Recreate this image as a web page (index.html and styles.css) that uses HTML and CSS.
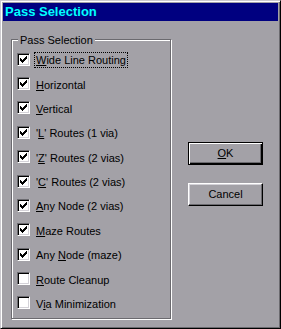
FILE: index.html
```html
<!DOCTYPE html>
<html>
<head>
<meta charset="utf-8">
<link rel="stylesheet" href="styles.css">
</head>
<body>
<div class="window">
  <div class="titlebar">Pass Selection</div>
  <div class="main">
    <div class="group">
      <span class="legend">Pass Selection</span>
      <div class="rows">
        <div class="row"><span class="cb on"><svg viewBox="0 0 7 7" width="7" height="7"><path d="M0 2h1v3H0zM1 3h1v3H1zM2 4h1v3H2zM3 3h1v3H3zM4 2h1v3H4zM5 1h1v3H5zM6 0h1v3H6z"/></svg></span><span class="lbl focus"><u>W</u>ide Line Routing</span></div>
        <div class="row"><span class="cb on"><svg viewBox="0 0 7 7" width="7" height="7"><path d="M0 2h1v3H0zM1 3h1v3H1zM2 4h1v3H2zM3 3h1v3H3zM4 2h1v3H4zM5 1h1v3H5zM6 0h1v3H6z"/></svg></span><span class="lbl"><u>H</u>orizontal</span></div>
        <div class="row"><span class="cb on"><svg viewBox="0 0 7 7" width="7" height="7"><path d="M0 2h1v3H0zM1 3h1v3H1zM2 4h1v3H2zM3 3h1v3H3zM4 2h1v3H4zM5 1h1v3H5zM6 0h1v3H6z"/></svg></span><span class="lbl"><u>V</u>ertical</span></div>
        <div class="row"><span class="cb on"><svg viewBox="0 0 7 7" width="7" height="7"><path d="M0 2h1v3H0zM1 3h1v3H1zM2 4h1v3H2zM3 3h1v3H3zM4 2h1v3H4zM5 1h1v3H5zM6 0h1v3H6z"/></svg></span><span class="lbl">'<u>L</u>' Routes (1 via)</span></div>
        <div class="row"><span class="cb on"><svg viewBox="0 0 7 7" width="7" height="7"><path d="M0 2h1v3H0zM1 3h1v3H1zM2 4h1v3H2zM3 3h1v3H3zM4 2h1v3H4zM5 1h1v3H5zM6 0h1v3H6z"/></svg></span><span class="lbl">'<u>Z</u>' Routes (2 vias)</span></div>
        <div class="row"><span class="cb on"><svg viewBox="0 0 7 7" width="7" height="7"><path d="M0 2h1v3H0zM1 3h1v3H1zM2 4h1v3H2zM3 3h1v3H3zM4 2h1v3H4zM5 1h1v3H5zM6 0h1v3H6z"/></svg></span><span class="lbl">'<u>C</u>' Routes (2 vias)</span></div>
        <div class="row"><span class="cb on"><svg viewBox="0 0 7 7" width="7" height="7"><path d="M0 2h1v3H0zM1 3h1v3H1zM2 4h1v3H2zM3 3h1v3H3zM4 2h1v3H4zM5 1h1v3H5zM6 0h1v3H6z"/></svg></span><span class="lbl"><u>A</u>ny Node (2 vias)</span></div>
        <div class="row"><span class="cb on"><svg viewBox="0 0 7 7" width="7" height="7"><path d="M0 2h1v3H0zM1 3h1v3H1zM2 4h1v3H2zM3 3h1v3H3zM4 2h1v3H4zM5 1h1v3H5zM6 0h1v3H6z"/></svg></span><span class="lbl"><u>M</u>aze Routes</span></div>
        <div class="row"><span class="cb on"><svg viewBox="0 0 7 7" width="7" height="7"><path d="M0 2h1v3H0zM1 3h1v3H1zM2 4h1v3H2zM3 3h1v3H3zM4 2h1v3H4zM5 1h1v3H5zM6 0h1v3H6z"/></svg></span><span class="lbl">Any <u>N</u>ode (maze)</span></div>
        <div class="row"><span class="cb"></span><span class="lbl"><u>R</u>oute Cleanup</span></div>
        <div class="row"><span class="cb"></span><span class="lbl">V<u>i</u>a Minimization</span></div>
      </div>
    </div>
    <div class="buttons">
      <div class="btn default"><span><u>O</u>K</span></div>
      <div class="btn">Cancel</div>
    </div>
  </div>
</div>
</body>
</html>
```

FILE: styles.css
```css
html, body {
  margin: 0;
  padding: 0;
  background: #a3a1a7;
}
.window {
  width: 281px;
  height: 329px;
  box-sizing: border-box;
  background: #a3a1a7;
  border: 1px solid;
  border-color: #cbc9cf #000 #000 #cbc9cf;
  box-shadow: inset 1px 1px #fff, inset -1px -1px #6b6a6f;
  padding: 2px;
  display: flex;
  flex-direction: column;
  font-family: "Liberation Sans", Arial, sans-serif;
  font-size: 11px;
  color: #000;
}
.titlebar {
  height: 18px;
  line-height: 18px;
  background: #000080;
  color: #00ffff;
  font-weight: bold;
  font-size: 13px;
  padding-left: 2px;
  white-space: nowrap;
}
.main {
  display: flex;
  align-items: flex-start;
  padding: 18px 0 0 8px;
}
.group {
  position: relative;
  width: 160px;
  height: 280px;
  box-sizing: border-box;
  border: 1px solid #6b6a6f;
  box-shadow: inset 1px 1px #fff, 1px 1px #fff;
}
.legend {
  position: absolute;
  top: -6px;
  left: 6px;
  padding: 0 2px;
  background: #a3a1a7;
  line-height: 13px;
  white-space: nowrap;
}
.rows {
  padding: 7px 0 0 5px;
  display: flex;
  flex-direction: column;
}
.row {
  height: 24.375px;
  display: flex;
  align-items: center;
}
.cb {
  width: 13px;
  height: 13px;
  box-sizing: border-box;
  background: #fff;
  border: 1px solid;
  border-color: #6b6a6f #fff #fff #6b6a6f;
  box-shadow: inset 1px 1px #000, inset -1px -1px #d4d2d8;
  padding: 2px;
  display: flex;
  flex: none;
}
.cb svg {
  display: block;
  shape-rendering: crispEdges;
  fill: #000;
}
.lbl {
  margin-left: 5px;
  margin-top: 2px;
  padding: 0 1px;
  line-height: 14px;
  white-space: nowrap;
}
.lbl u {
  text-decoration-thickness: 1px;
  text-underline-offset: 1px;
}
.focus {
  outline: 1px dotted #000;
}
.buttons {
  margin-left: 17px;
  margin-top: 103px;
  display: flex;
  flex-direction: column;
  gap: 18px;
}
.btn {
  width: 75px;
  height: 23px;
  box-sizing: border-box;
  border: 1px solid;
  border-color: #fff #000 #000 #fff;
  box-shadow: inset -1px -1px #6b6a6f, inset 1px 1px #d4d2d8;
  display: flex;
  align-items: center;
  justify-content: center;
  line-height: 13px;
}
.btn.default {
  border-color: #000;
  box-shadow: inset 1px 1px #fff, inset -1px -1px #000, inset -2px -2px #6b6a6f;
}
.btn u {
  text-decoration-thickness: 1px;
  text-underline-offset: 1px;
}
```
